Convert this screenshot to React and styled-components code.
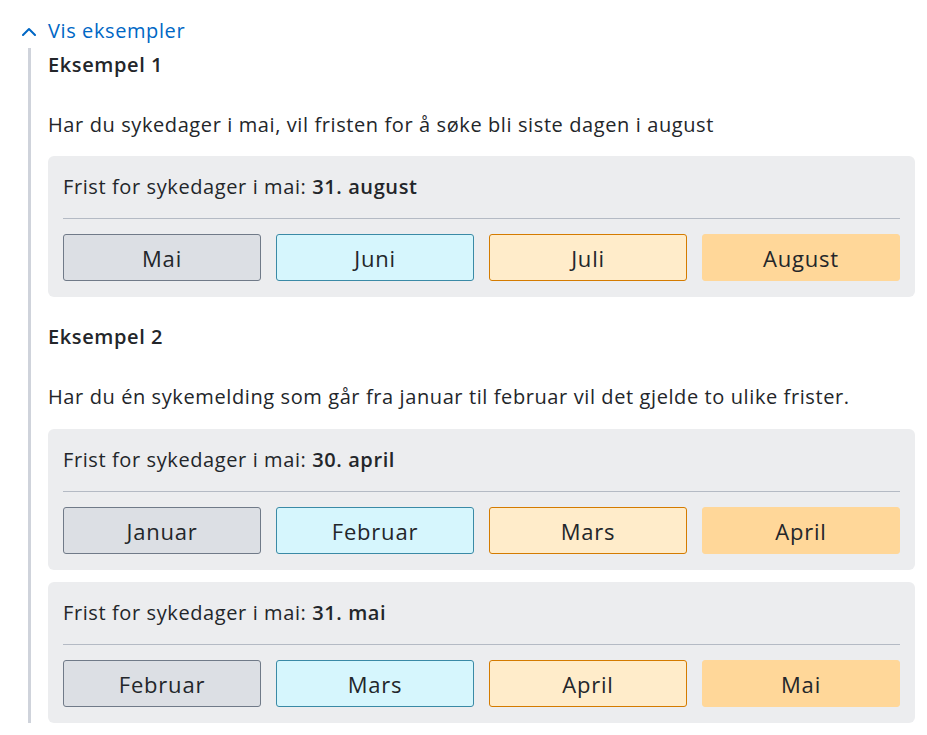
import styled, { createGlobalStyle } from "styled-components";

const Global = createGlobalStyle`
  body {
    margin: 0;
    background: #fff;
    font-family: "Open Sans", "Noto Sans", sans-serif;
    color: #23262a;
  }
`;

const Wrapper = styled.div`
  padding: 16px 12px 13px 22px;
`;

const Toggle = styled.button`
  display: flex;
  align-items: center;
  gap: 12px;
  padding: 0;
  border: 0;
  background: none;
  color: #0067c5;
  font-family: inherit;
  font-size: 20px;
  letter-spacing: 0.6px;
  line-height: 30px;
  cursor: pointer;
`;

const Content = styled.div`
  margin: 2px 0 0 6px;
  border-left: 3px solid #cfd3db;
  padding: 3px 0 0 17px;
  display: flex;
  flex-direction: column;
`;

const H3 = styled.h3`
  margin: ${(p) => p.$mt || 0}px 0 0;
  font-size: 20px;
  font-weight: 600;
  letter-spacing: 0.6px;
  line-height: 28px;
`;

const P = styled.p`
  margin: 0;
  font-size: 20px;
  letter-spacing: 0.6px;
  line-height: 28px;
  padding: 32px 0 ${(p) => p.$pb || 17}px;
`;

const Box = styled.div`
  background: #ecedef;
  border-radius: 6px;
  padding: 17px 15px 16px;
  margin-bottom: ${(p) => p.$mb || 0}px;
`;

const Frist = styled.div`
  font-size: 20px;
  letter-spacing: 0.6px;
  line-height: 28px;
  padding-bottom: 17px;
  border-bottom: 1px solid #b4bac4;
  margin-bottom: 15px;

  b {
    font-weight: 600;
  }
`;

const Months = styled.div`
  display: grid;
  grid-template-columns: repeat(4, 1fr);
  gap: 15px;
`;

const tones = {
  gray: { bg: "#dcdfe4", border: "#707a88" },
  blue: { bg: "#d6f6fd", border: "#3a8aa6" },
  orange: { bg: "#ffecca", border: "#d47b00" },
  peach: { bg: "#ffd799", border: "#ffd799" },
};

const Month = styled.div`
  height: 47px;
  box-sizing: border-box;
  display: flex;
  align-items: center;
  justify-content: center;
  border-radius: 3px;
  font-size: 22px;
  letter-spacing: 0.8px;
  background: ${(p) => tones[p.$tone].bg};
  border: 1px solid ${(p) => tones[p.$tone].border};
`;

const order = ["gray", "blue", "orange", "peach"];

function Deadline({ date, months, mb }) {
  return (
    <Box $mb={mb}>
      <Frist>
        Frist for sykedager i mai: <b>{date}</b>
      </Frist>
      <Months>
        {months.map((m, i) => (
          <Month key={m} $tone={order[i]}>
            {m}
          </Month>
        ))}
      </Months>
    </Box>
  );
}

const Chevron = () => (
  <svg width="14" height="9" viewBox="0 0 14 9" fill="none">
    <path
      d="M1 8l6-6 6 6"
      stroke="#0067c5"
      strokeWidth="2"
      strokeLinecap="round"
      strokeLinejoin="round"
    />
  </svg>
);

export default function App() {
  return (
    <>
      <Global />
      <Wrapper>
        <Toggle>
          <Chevron />
          Vis eksempler
        </Toggle>
        <Content>
          <H3>Eksempel 1</H3>
          <P>Har du sykedager i mai, vil fristen for å søke bli siste dagen i august</P>
          <Deadline date="31. august" months={["Mai", "Juni", "Juli", "August"]} />
          <H3 $mt={26}>Eksempel 2</H3>
          <P $pb={18}>
            Har du én sykemelding som går fra januar til februar vil det gjelde to ulike
            frister.
          </P>
          <Deadline
            date="30. april"
            months={["Januar", "Februar", "Mars", "April"]}
            mb={12}
          />
          <Deadline date="31. mai" months={["Februar", "Mars", "April", "Mai"]} />
        </Content>
      </Wrapper>
    </>
  );
}
